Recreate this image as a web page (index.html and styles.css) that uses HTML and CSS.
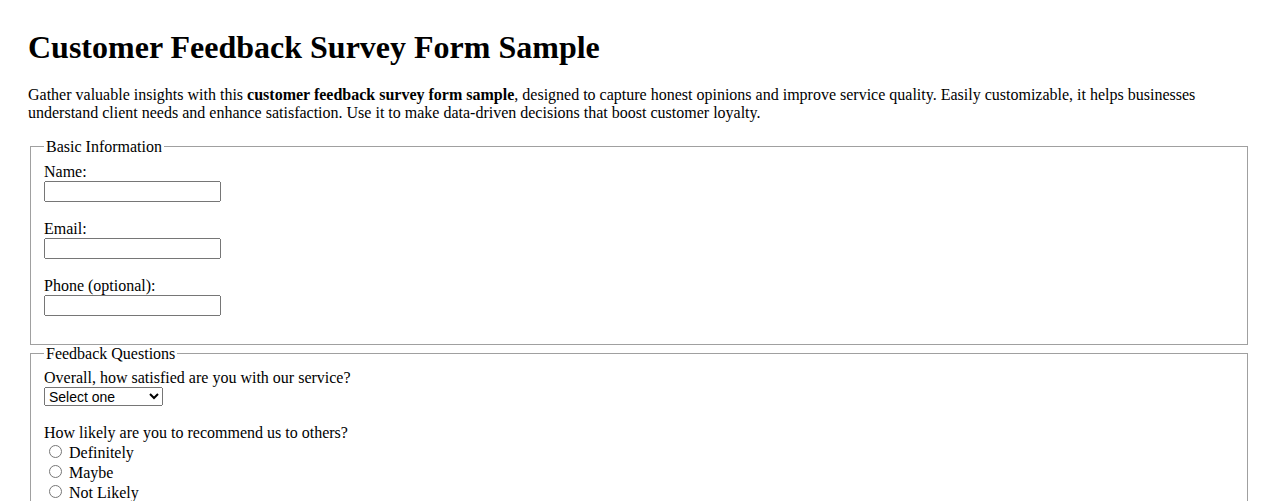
FILE: index.html
```html
<!DOCTYPE html>
<html lang="en">
<head>
<meta charset="utf-8">
<title>Customer Feedback Survey Form Sample</title>
<link rel="stylesheet" href="styles.css">
</head>
<body class="page">
<h1 class="title">Customer Feedback Survey Form Sample</h1>
<p class="intro">Gather valuable insights with this <strong>customer feedback survey form sample</strong>, designed to capture honest opinions and improve service quality. Easily customizable, it helps businesses understand client needs and enhance satisfaction. Use it to make data-driven decisions that boost customer loyalty.</p>
<form class="survey">
<fieldset class="group">
<legend class="group-title">Basic Information</legend>
<label class="field-label" for="name">Name:</label><br>
<input class="text-input" type="text" id="name" name="name"><br><br>
<label class="field-label" for="email">Email:</label><br>
<input class="text-input" type="email" id="email" name="email"><br><br>
<label class="field-label" for="phone">Phone (optional):</label><br>
<input class="text-input" type="tel" id="phone" name="phone"><br><br>
</fieldset>
<fieldset class="group">
<legend class="group-title">Feedback Questions</legend>
<label class="field-label" for="satisfaction">Overall, how satisfied are you with our service?</label><br>
<select class="select-input" id="satisfaction" name="satisfaction">
<option>Select one</option>
<option>Very Satisfied</option>
<option>Satisfied</option>
<option>Neutral</option>
<option>Dissatisfied</option>
</select><br><br>
<label class="field-label">How likely are you to recommend us to others?</label><br>
<input class="radio-input" type="radio" name="recommend" value="definitely"> Definitely<br>
<input class="radio-input" type="radio" name="recommend" value="maybe"> Maybe<br>
<input class="radio-input" type="radio" name="recommend" value="notlikely"> Not Likely<br><br>
<label class="field-label" for="comments">Additional comments:</label><br>
<textarea class="text-area" id="comments" name="comments" rows="4" cols="50"></textarea>
</fieldset>
</form>
</body>
</html>
```
FILE: styles.css
```css
.page {
  margin: 0;
  padding: 8px 28px;
  font-family: "Liberation Serif", "Times New Roman", serif;
  font-size: 16px;
  color: #000;
  background: #fff;
}
.title {
  font-size: 2em;
  font-weight: bold;
  margin: 21.44px 0 19.5px;
}
.intro {
  margin: 1em 0;
}
.group {
  margin: 0 2px;
  padding: 6.6px 13px 10px;
  border: 1px solid #a0a0a0;
}
.group-title {
  padding: 0 2px;
}
.text-input,
.select-input,
.text-area {
  font-family: "Liberation Sans", Arial, sans-serif;
  font-size: 13.333px;
}
.text-input {
  box-sizing: border-box;
  width: 177px;
  height: 21px;
}
.select-input {
  box-sizing: border-box;
  width: 119px;
  height: 19px;
  font-size: 14px;
}
.radio-input {
  margin: 3px 3px 0 5px;
}
```
